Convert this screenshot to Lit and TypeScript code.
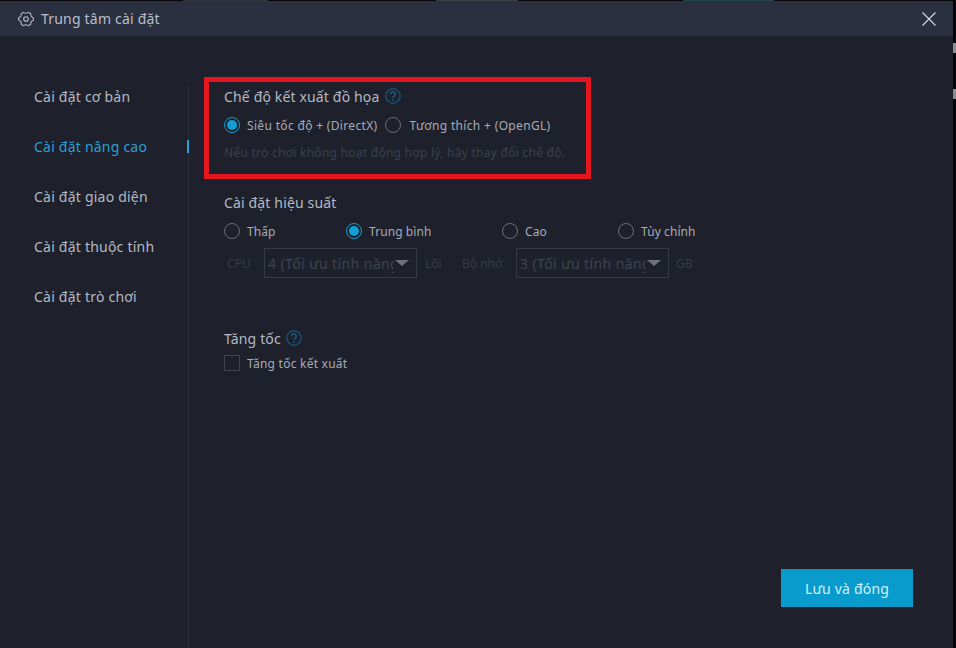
import { LitElement, html, css } from "lit";
import { customElement } from "lit/decorators.js";

const helpIcon = html`<svg class="help" viewBox="0 0 16 16" width="16" height="16" aria-hidden="true">
  <circle cx="8" cy="8" r="7.2" fill="none" stroke="#1a4f70" stroke-width="1.5"></circle>
  <path d="M5.7 6.2a2.3 2.3 0 1 1 3.6 1.9c-.8.5-1.3 1-1.3 2" fill="none" stroke="#1a5f86" stroke-width="1.5"></path>
  <circle cx="8" cy="12" r=".9" fill="#1a5f86"></circle>
</svg>`;

const gear = html`<svg class="gear" viewBox="0 0 16 16" width="16" height="16" aria-hidden="true">
  <path d="M5.4 1.4c.5-.3 1 .9 2.600.9s2.100-1.200 2.600-.9l2 1.100c.5.300-.2 1.500.6 2.800s2.200 1.300 2.200 1.800v1.800c0 .5-1.400.5-2.200 1.800s-.1 2.500-.6 2.800l-2 1.100c-.5.300-1-.9-2.600-.9s-2.100 1.200-2.600.9l-2-1.100c-.5-.3.200-1.500-.6-2.800S.6 9.300.6 8.800V7.100c0-.5 1.400-.5 2.200-1.800s.1-2.500.6-2.800z" fill="none" stroke="#b4bac6" stroke-width="1.1" stroke-linejoin="round"></path>
  <circle cx="8" cy="8" r="2.300" fill="none" stroke="#b4bac6" stroke-width="1.100"></circle>
</svg>`;

@customElement("app-root")
export class AppRoot extends LitElement {
  static styles = css`
    :host {
      display: flex;
      flex-direction: column;
      width: 956px;
      height: 648px;
      background: #050507;
      font-family: "Noto Sans", "Open Sans", sans-serif;
      position: relative;
      overflow: hidden;
    }
    .strip { height: 1px; flex: none; display: flex; }
    .strip span { display: block; height: 1px; }
    .g0 { width: 183px; }
    .g1 { width: 85px; background: #30343f; }
    .g2 { width: 168px; }
    .g3 { width: 82px; background: #3a3e46; }
    .g4 { width: 165px; }
    .g5 { width: 91px; background: #20404a; }
    .dialog {
      flex: 1;
      display: flex;
      flex-direction: column;
      margin: 0 3px 0 0;
      background: #1e212c;
      min-height: 0;
    }
    .header {
      height: 35px;
      flex: none;
      display: flex;
      align-items: center;
      background: #2a3040;
      padding: 0 17px 0 18px;
      color: #b9bfca;
      font-size: 14px;
      letter-spacing: 0.2px;
    }
    .gear { margin-right: 7px; }
    .title { flex: 1; }
    .close { display: block; }
    .main { flex: 1; display: flex; min-height: 0; padding-top: 50px; }
    .side {
      width: 188px;
      flex: none;
      border-right: 1px solid #2c303b;
      display: flex;
      flex-direction: column;
      box-sizing: content-box;
    }
    .nav {
      height: 50px;
      flex: none;
      display: flex;
      align-items: center;
      padding-left: 34px;
      font-size: 14px;
      letter-spacing: 0.22px;
      color: #b4b9c3;
      position: relative;
      top: -15px;
    }
    .nav.active { color: #2a9fd6; }
    .nav.active::after {
      content: "";
      position: absolute;
      right: -1px;
      top: 19px;
      width: 2px;
      height: 13px;
      background: #2a9fd6;
    }
    .content {
      flex: 1;
      padding: 0 0 41px 35px;
      display: flex;
      flex-direction: column;
      min-width: 0;
    }
    .heading {
      display: flex;
      align-items: center;
      gap: 6px;
      height: 20px;
      color: #b4b9c3;
      font-size: 14px;
      letter-spacing: 0.15px;
    }
    .row {
      display: flex;
      align-items: center;
      height: 20px;
      color: #a6abb6;
      font-size: 12px;
    }
    .radio {
      width: 16px;
      height: 16px;
      box-sizing: border-box;
      border: 1px solid #6a6e78;
      border-radius: 50%;
      flex: none;
      margin-right: 7px;
      display: flex;
      align-items: center;
      justify-content: center;
    }
    .radio.on { border-color: #119ed2; }
    .radio.on::after {
      content: "";
      width: 10px;
      height: 10px;
      border-radius: 50%;
      background: #119ed2;
    }
    .opt { display: flex; align-items: center; white-space: nowrap; }
    .mode { margin-top: 9px; gap: 8px; letter-spacing: 0.33px; }
    .mode .opt + .opt .radio { margin-right: 8px; }
    .hint { margin-top: 8px; height: 20px; line-height: 20px; font-size: 12px; letter-spacing: 0.26px; color: #3c404b; white-space: nowrap; }
    .perf { margin-top: 29px; }
    .perf-row { margin-top: 9px; display: grid; grid-template-columns: 122px 156px 116px auto; width: 480px; letter-spacing: 0.08px; }
    .selects { margin-top: 7px; display: flex; align-items: center; height: 30px; font-size: 12px; color: #363a44; white-space: nowrap; }
    .select {
      width: 153px;
      height: 30px;
      box-sizing: border-box;
      border: 1px solid #363a44;
      display: flex;
      align-items: center;
      padding-left: 3px;
      font-size: 14px;
      letter-spacing: 0.4px;
      position: relative;
      overflow: hidden;
      color: #3f434e;
    }
    .select span { display: block; width: 126px; overflow: hidden; white-space: nowrap; }
    .select::after {
      content: "";
      position: absolute;
      right: 7px;
      top: 11px;
      border-left: 7px solid transparent;
      border-right: 7px solid transparent;
      border-top: 6px solid #6e727b;
    }
    .cpu { width: 40px; padding-left: 3px; box-sizing: border-box; }
    .lbl1 { width: 38px; padding-left: 8px; box-sizing: border-box; }
    .lbl2 { width: 61px; padding-left: 7px; box-sizing: border-box; }
    .lbl3 { padding-left: 7px; }
    .accel { margin-top: 50px; gap: 5px; }
    .check { margin-top: 5px; letter-spacing: 0.24px; }
    .box { width: 16px; height: 16px; box-sizing: border-box; border: 1px solid #3f434d; margin-right: 7px; flex: none; }
    .footer { margin-top: auto; display: flex; justify-content: flex-end; padding-right: 40px; }
    .btn {
      width: 132px;
      height: 38px;
      border: 0;
      padding: 0;
      background: #0a9bcd;
      color: #d4f1fb;
      font: inherit;
      font-size: 14px;
      letter-spacing: 0.2px;
    }
    .annot {
      position: absolute;
      left: 204px;
      top: 77px;
      width: 387px;
      height: 102px;
      box-sizing: border-box;
      border: 5px solid #e5161f;
      pointer-events: none;
    }
    .speck { position: absolute; right: 0; width: 3px; background: #8b8d90; }
    .s1 { top: 43px; height: 10px; }
    .s2 { top: 89px; height: 10px; }
  `;

  private nav = ["Cài đặt cơ bản", "Cài đặt nâng cao", "Cài đặt giao diện", "Cài đặt thuộc tính", "Cài đặt trò chơi"];

  render() {
    return html`
      <div class="strip">
        <span class="g0"></span><span class="g1"></span><span class="g2"></span>
        <span class="g3"></span><span class="g4"></span><span class="g5"></span>
      </div>
      <div class="dialog">
        <div class="header">
          ${gear}
          <span class="title">Trung tâm cài đặt</span>
          <svg class="close" viewBox="0 0 14 14" width="14" height="14" aria-hidden="true">
            <path d="M.5.5l13 13M13.500.5l-13 13" stroke="#d6dae2" stroke-width="1.1" fill="none"></path>
          </svg>
        </div>
        <div class="main">
          <div class="side">
            ${this.nav.map((n, i) => html`<div class="nav ${i === 1 ? "active" : ""}">${n}</div>`)}
          </div>
          <div class="content">
            <div class="heading">Chế độ kết xuất đồ họa ${helpIcon}</div>
            <div class="row mode">
              <span class="opt"><span class="radio on"></span>Siêu tốc độ + (DirectX)</span>
              <span class="opt"><span class="radio"></span>Tương thích + (OpenGL)</span>
            </div>
            <div class="hint">Nếu trò chơi không hoạt động hợp lý, hãy thay đổi chế độ.</div>

            <div class="heading perf">Cài đặt hiệu suất</div>
            <div class="row perf-row">
              <span class="opt"><span class="radio"></span>Thấp</span>
              <span class="opt"><span class="radio on"></span>Trung bình</span>
              <span class="opt"><span class="radio"></span>Cao</span>
              <span class="opt"><span class="radio"></span>Tùy chỉnh</span>
            </div>
            <div class="selects">
              <span class="cpu">CPU</span>
              <div class="select"><span>4 (Tối ưu tính năng)</span></div>
              <span class="lbl1">Lõi</span>
              <span class="lbl2">Bộ nhớ</span>
              <div class="select"><span>3 (Tối ưu tính năng)</span></div>
              <span class="lbl3">GB</span>
            </div>

            <div class="heading accel">Tăng tốc ${helpIcon}</div>
            <div class="row check"><span class="box"></span>Tăng tốc kết xuất</div>

            <div class="footer"><button class="btn">Lưu và đóng</button></div>
          </div>
        </div>
      </div>
      <div class="annot"></div>
      <div class="speck s1"></div>
      <div class="speck s2"></div>
    `;
  }
}
